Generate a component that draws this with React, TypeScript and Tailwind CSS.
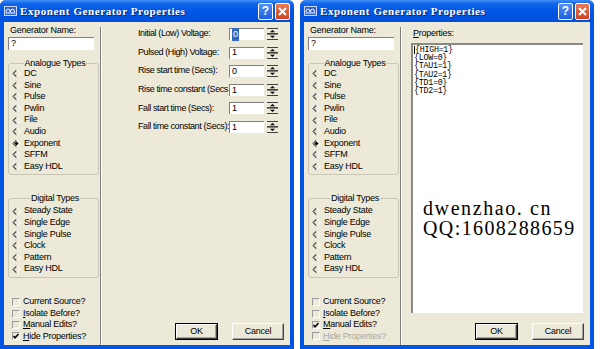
import React from "react";

function TitleIcon() {
  return (
    <svg width="13" height="10" viewBox="0 0 13 10" className="shrink-0">
      <rect x="0.5" y="0.5" width="12" height="9" fill="#2f5fd0" stroke="#c8d8ff" />
      <path d="M2 6 Q2 3 4 3 Q6 3 6 6 M6.5 6 Q6.5 3 8.5 3 Q10.5 3 10.5 6" stroke="#fff" fill="none" strokeWidth="1" />
      <line x1="1.5" y1="7" x2="11.5" y2="7" stroke="#fff" />
    </svg>
  );
}

function TitleBar() {
  return (
    <div className="flex h-[22px] shrink-0 items-center rounded-t-[6px] bg-[linear-gradient(to_bottom,#3d8ef5_0%,#0f63ea_18%,#0056e4_55%,#0050dc_100%)] pl-[4px] pr-[4px]">
      <TitleIcon />
      <span className="ml-[3px] font-['Liberation_Serif',serif] text-[11px] font-bold tracking-[0.6px] text-white [text-shadow:1px_1px_0_#0a2a80]">
        Exponent Generator Properties
      </span>
      <div className="ml-auto flex gap-[2px]">
        <div className="flex h-[17px] w-[15px] items-center justify-center rounded-[2px] border border-white bg-[linear-gradient(to_bottom,#4f8ffa,#1f5fe0)] font-['Liberation_Sans',sans-serif] text-[12px] font-bold leading-none text-white">
          ?
        </div>
        <div className="flex h-[17px] w-[15px] items-center justify-center rounded-[2px] border border-white bg-[linear-gradient(to_bottom,#ee7a55,#d0421c)]">
          <svg width="9" height="9" viewBox="0 0 9 9">
            <path d="M1 1 L8 8 M8 1 L1 8" stroke="#fff" strokeWidth="2" />
          </svg>
        </div>
      </div>
    </div>
  );
}

function Radio({ label, on }: { label: string; on?: boolean }) {
  return (
    <div className="flex h-[11.6px] items-center">
      <svg width="9" height="9" viewBox="0 0 9 9" className="shrink-0">
        <path d="M4.5 0.5 L0.5 4.5 L4.5 8.5" stroke="#808080" fill="none" />
        <path d="M4.5 1.7 L1.7 4.5 L4.5 7.3" stroke="#404040" fill="none" />
        <path d="M4.5 0.5 L8.5 4.5 L4.5 8.5" stroke="#ffffff" fill="none" />
        {on && <path d="M4.5 2.5 L6.5 4.5 L4.5 6.5 L2.5 4.5Z" fill="#000" />}
      </svg>
      <span className="ml-[3px] whitespace-nowrap">{label}</span>
    </div>
  );
}

function Group({ title, items, on, pt }: { title: string; items: string[]; on?: string; pt: string }) {
  return (
    <fieldset className={`rounded-[3px] border border-[#c9c6b6] pb-[2px] pl-[3px] ${pt}`}>
      <legend className="mx-auto px-[1px] leading-[10px]">{title}</legend>
      {items.map((it) => (
        <Radio key={it} label={it} on={it === on} />
      ))}
    </fieldset>
  );
}

function Check({ label, u, rest, on, off }: { label?: string; u?: string; rest?: string; on?: boolean; off?: boolean }) {
  return (
    <div className={`flex h-[11.4px] items-center ${off ? "text-[#aca899]" : ""}`}>
      <div className="relative ml-[4px] h-[8px] w-[8px] shrink-0 border-t border-l border-t-[#9a9a9a] border-l-[#9a9a9a] border-b border-r border-b-white border-r-white">
        {on && (
          <svg width="8" height="8" viewBox="0 0 8 8" className="absolute left-[-1px] top-[-1px]">
            <path d="M1.5 4 L3 5.8 L6.5 2" stroke="#000" strokeWidth="1.5" fill="none" />
          </svg>
        )}
      </div>
      <span className="ml-[3px] whitespace-nowrap">
        {label}
        {u && <span className="underline">{u}</span>}
        {rest}
      </span>
    </div>
  );
}

function LeftColumn({ right }: { right?: boolean }) {
  return (
    <div className="flex w-[96px] shrink-0 flex-col pl-[4px] pr-[1px]">
      <div className="mt-[3px] pl-[2px] leading-[10px]">Generator Name:</div>
      <div className="mt-[2px] flex h-[13px] w-[86px] items-center border-t border-l border-t-[#808080] border-l-[#808080] bg-white pl-[2px]">
        ?
      </div>
      <div className="mt-[8px]">
        <Group
          title="Analogue Types"
          pt="pt-0"
          on="Exponent"
          items={["DC", "Sine", "Pulse", "Pwlin", "File", "Audio", "Exponent", "SFFM", "Easy HDL"]}
        />
      </div>
      <div className="mt-[18px]">
        <Group
          title="Digital Types"
          pt="pt-[2px]"
          items={["Steady State", "Single Edge", "Single Pulse", "Clock", "Pattern", "Easy HDL"]}
        />
      </div>
      <div className="mt-auto pb-[3px]">
        <Check label="Current Source?" />
        <Check u="I" rest="solate Before?" />
        <Check u="M" rest="anual Edits?" on={right} />
        <Check u="H" rest="ide Properties?" on={!right} off={right} />
      </div>
    </div>
  );
}

function Separator() {
  return (
    <div className="mt-[5px] flex shrink-0">
      <div className="w-[1px] bg-[#808080]" />
      <div className="w-[1px] bg-white" />
    </div>
  );
}

function Buttons() {
  return (
    <div className="flex justify-end gap-[14px] pr-[6px]">
      <div className="h-[17px] w-[43px] border border-black">
        <div className="flex h-full items-center justify-center border border-t-white border-l-white border-b-[#404040] border-r-[#404040] shadow-[inset_-1px_-1px_0_#a0a0a0]">
          OK
        </div>
      </div>
      <div className="flex h-[17px] w-[52px] items-center justify-center border border-t-white border-l-white border-b-[#404040] border-r-[#404040] shadow-[inset_-1px_-1px_0_#a0a0a0]">
        Cancel
      </div>
    </div>
  );
}

function Spinner() {
  return (
    <svg width="11" height="12" viewBox="0 0 11 12" className="ml-[3px] shrink-0">
      <rect x="0" y="0" width="11" height="12" fill="#ece9d8" />
      <line x1="0" y1="0.5" x2="11" y2="0.5" stroke="#404040" />
      <line x1="0" y1="5.5" x2="11" y2="5.5" stroke="#404040" />
      <line x1="0" y1="6.5" x2="11" y2="6.5" stroke="#808080" />
      <line x1="0" y1="11.5" x2="11" y2="11.5" stroke="#404040" />
      <path d="M5.5 2 L8 4.3 L3 4.3Z" fill="#000" />
      <path d="M3 7.8 L8 7.8 L5.5 10.1Z" fill="#000" />
    </svg>
  );
}

// the fourth label is shown clipped by its edit box in the dialog
const fields = [
  { label: "Initial (Low) Voltage:", value: "0", sel: true },
  { label: "Pulsed (High) Voltage:", value: "1" },
  { label: "Rise start time (Secs):", value: "0" },
  { label: "Rise time constant (Secs", value: "1" },
  { label: "Fall start time (Secs):", value: "1" },
  { label: "Fall time constant (Secs):", value: "1" },
];

function FieldsPanel() {
  return (
    <div className="flex flex-1 flex-col">
      <div className="pt-[2.7px] pl-[36px]">
        {fields.map((f) => (
          <div key={f.label} className="flex h-[18.6px] items-center">
            <div className="w-[91px] whitespace-nowrap tracking-[-0.4px]">{f.label}</div>
            <div className="flex h-[12px] w-[35px] items-center border-t border-l border-t-[#808080] border-l-[#808080] bg-white pl-[2px]">
              {f.sel ? <span className="bg-[#316ac5] px-[1px] text-white">{f.value}</span> : f.value}
            </div>
            <Spinner />
          </div>
        ))}
      </div>
      <div className="mt-auto pb-[5px]">
        <Buttons />
      </div>
    </div>
  );
}

const props = ["{HIGH=1}", "{LOW=0}", "{TAU1=1}", "{TAU2=1}", "{TD1=0}", "{TD2=1}"];

function PropertiesPanel() {
  return (
    <div className="flex flex-1 flex-col">
      <div className="pt-[6px] pl-[11px] leading-[10px]">
        <span className="underline">P</span>roperties:
      </div>
      <div className="mt-[5px] ml-[9px] mr-[7px] flex h-[270px] flex-col border-t-2 border-l-2 border-t-[#8a8a84] border-l-[#8a8a84] bg-white pt-[1px] pl-[1px]">
        <div className="font-['Liberation_Mono',monospace] text-[8.3px] leading-[8.2px]">
          {props.map((p, i) => (
            <div key={p} className="flex">
              {i === 0 && <span className="w-[1px] bg-black" />}
              {p}
            </div>
          ))}
        </div>
        <div className="mt-[103px] ml-[9px] font-['Liberation_Serif',serif] text-[20px] leading-[20px] tracking-[1.6px] text-black">
          <div>dwenzhao. cn</div>
          <div className="tracking-[1.4px]">QQ:1608288659</div>
        </div>
      </div>
      <div className="mt-[10px] pb-[5px]">
        <Buttons />
      </div>
    </div>
  );
}

function Dialog({ right }: { right?: boolean }) {
  return (
    <div className="flex h-[349px] w-[294px] shrink-0 flex-col rounded-t-[6px] bg-[#0055e5]">
      <TitleBar />
      <div className="mx-[4px] mb-[4px] flex flex-1 bg-[#ece9d8] font-['Liberation_Sans',Arial,sans-serif] text-[9px] tracking-[-0.25px] text-black">
        <LeftColumn right={right} />
        <Separator />
        {right ? <PropertiesPanel /> : <FieldsPanel />}
      </div>
    </div>
  );
}

export default function App() {
  return (
    <div className="flex h-[349px] w-[600px] gap-[6px] overflow-hidden bg-white">
      <Dialog />
      <Dialog right />
    </div>
  );
}
